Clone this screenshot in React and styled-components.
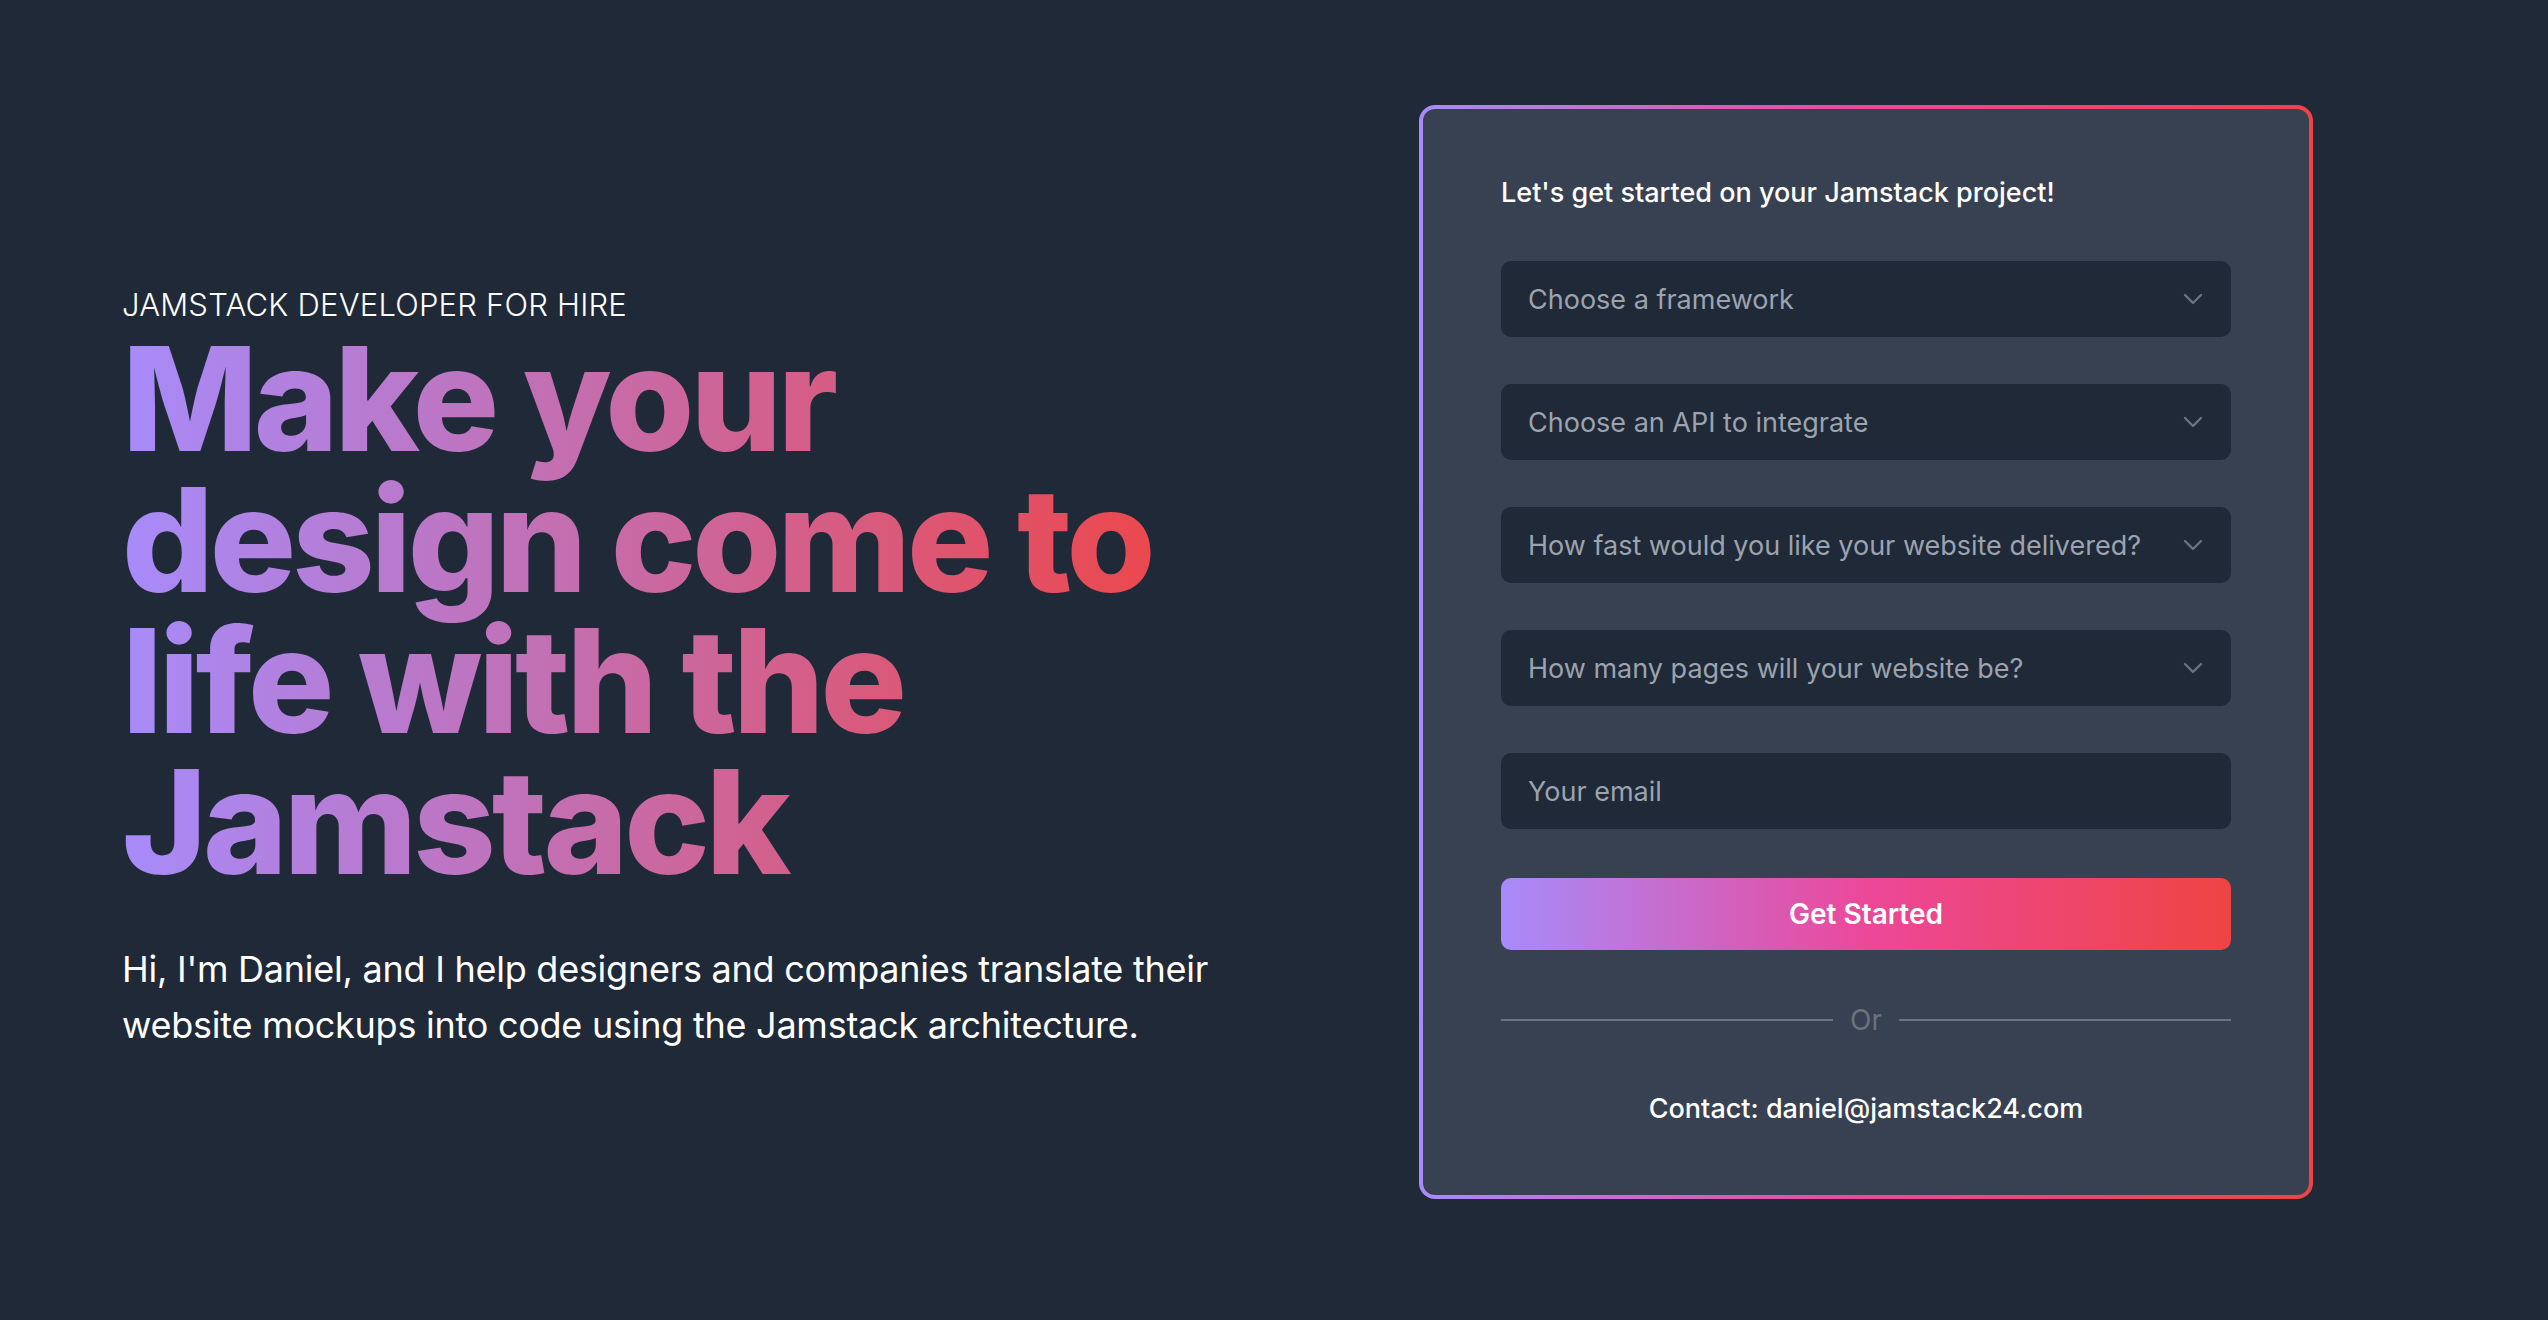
import React from "react";
import styled, { createGlobalStyle } from "styled-components";

const GlobalStyle = createGlobalStyle`
  * { box-sizing: border-box; }
  body {
    margin: 0;
    background-color: #1f2937;
    font-family: Inter, "Noto Sans", sans-serif;
    color: #ffffff;
  }
`;

const Page = styled.main`
  display: flex;
  align-items: center;
  min-height: 1320px;
  padding-left: 122px;
`;

const Intro = styled.section`
  flex: 0 0 1150px;
  display: flex;
  flex-direction: column;
  margin-top: 19px;
`;

const Eyebrow = styled.p`
  margin: 0 0 5px;
  font-size: 31px;
  font-weight: 300;
  line-height: 36px;
  letter-spacing: 0.2px;
  text-transform: uppercase;
`;

const Headline = styled.h1`
  margin: 0;
  font-size: 144px;
  font-weight: 800;
  line-height: 141px;
  letter-spacing: -4px;
  background: linear-gradient(to right, #a78bfa, #ef4444);
  -webkit-background-clip: text;
  background-clip: text;
  color: transparent;
  max-width: 1090px;
`;

const Lead = styled.p`
  margin: 49px 0 0;
  font-size: 36px;
  line-height: 56px;
  letter-spacing: -0.25px;
  max-width: 1120px;
`;

const Card = styled.section`
  flex: 0 0 894px;
  margin: 0 0 16px 147px;
  padding: 64px 78px 66px;
  border: 4px solid transparent;
  border-radius: 16px;
  background:
    linear-gradient(#374151, #374151) padding-box,
    linear-gradient(to right, #a78bfa, #ec4899 50%, #ef4444) border-box;
`;

const CardTitle = styled.h2`
  margin: 0 0 48px;
  font-size: 27px;
  font-weight: 500;
  line-height: 40px;
`;

const Form = styled.form`
  display: flex;
  flex-direction: column;
  gap: 47px;
`;

const Field = styled.div`
  display: flex;
  align-items: center;
  justify-content: space-between;
  height: 76px;
  padding: 0 28px 0 27px;
  border-radius: 10px;
  background-color: #1f2937;
  color: #9ca3af;
  font-size: 27px;
`;

const Chevron = styled.svg`
  width: 20px;
  height: 12px;
  color: #6b7280;
`;

const Button = styled.button`
  height: 72px;
  margin-top: 2px;
  border: 0;
  border-radius: 10px;
  background: linear-gradient(to right, #a78bfa, #ec4899 50%, #ef4444);
  color: #ffffff;
  font-family: inherit;
  font-size: 28px;
  font-weight: 600;
`;

const Divider = styled.div`
  display: flex;
  align-items: center;
  gap: 17px;
  margin-top: 50px;
  color: #6b7280;
  font-size: 28px;
  line-height: 40px;

  &::before,
  &::after {
    content: "";
    flex: 1;
    height: 2px;
    background-color: #6b7280;
  }
`;

const Contact = styled.p`
  margin: 49px 0 0;
  text-align: center;
  font-size: 27px;
  font-weight: 500;
  line-height: 40px;
`;

const fields = [
  { label: "Choose a framework", select: true },
  { label: "Choose an API to integrate", select: true },
  { label: "How fast would you like your website delivered?", select: true },
  { label: "How many pages will your website be?", select: true },
  { label: "Your email", select: false },
];

function SelectField({ label, select }) {
  return (
    <Field>
      <span>{label}</span>
      {select && (
        <Chevron viewBox="0 0 20 12" fill="none">
          <path d="M2 2l8 8 8-8" stroke="currentColor" strokeWidth="2.4" strokeLinecap="round" strokeLinejoin="round" />
        </Chevron>
      )}
    </Field>
  );
}

export default function App() {
  return (
    <>
      <GlobalStyle />
      <Page>
        <Intro>
          <Eyebrow>Jamstack developer for hire</Eyebrow>
          <Headline>Make your design come to life with the Jamstack</Headline>
          <Lead>
            Hi, I'm Daniel, and I help designers and companies translate their
            website mockups into code using the Jamstack architecture.
          </Lead>
        </Intro>
        <Card>
          <CardTitle>Let's get started on your Jamstack project!</CardTitle>
          <Form>
            {fields.map((f) => (
              <SelectField key={f.label} {...f} />
            ))}
            <Button type="button">Get Started</Button>
          </Form>
          <Divider>Or</Divider>
          <Contact>Contact: daniel@jamstack24.com</Contact>
        </Card>
      </Page>
    </>
  );
}
